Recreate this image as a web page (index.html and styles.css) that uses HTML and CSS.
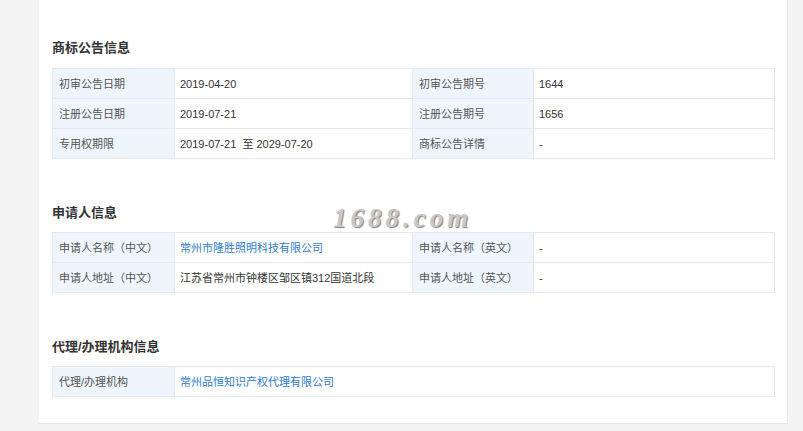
FILE: index.html
```
<!DOCTYPE html>
<html>
    <head>
        <title>商标详情</title>
        <meta charset="UTF-8" />
        <link rel="stylesheet" href="styles.css">
    </head>
    <body>
        <div class="main">
            <div class="panel">
                <div class="section">
                    <h2>商标公告信息</h2>
                    <table class="info">
                        <colgroup>
                            <col class="c-label" />
                            <col class="c-value" />
                            <col class="c-label2" />
                            <col />
                        </colgroup>
                        <tr>
                            <td class="label">初审公告日期</td>
                            <td>2019-04-20</td>
                            <td class="label">初审公告期号</td>
                            <td>1644</td>
                        </tr>
                        <tr>
                            <td class="label">注册公告日期</td>
                            <td>2019-07-21</td>
                            <td class="label">注册公告期号</td>
                            <td>1656</td>
                        </tr>
                        <tr>
                            <td class="label">专用权期限</td>
                            <td>2019-07-21&nbsp; 至 2029-07-20</td>
                            <td class="label">商标公告详情</td>
                            <td>-</td>
                        </tr>
                    </table>
                </div>

                <div class="section">
                    <h2>申请人信息</h2>
                    <table class="info">
                        <colgroup>
                            <col class="c-label" />
                            <col class="c-value" />
                            <col class="c-label2" />
                            <col />
                        </colgroup>
                        <tr>
                            <td class="label">申请人名称（中文）</td>
                            <td><a href="#">常州市隆胜照明科技有限公司</a></td>
                            <td class="label">申请人名称（英文）</td>
                            <td>-</td>
                        </tr>
                        <tr>
                            <td class="label">申请人地址（中文）</td>
                            <td>江苏省常州市钟楼区邹区镇312国道北段</td>
                            <td class="label">申请人地址（英文）</td>
                            <td>-</td>
                        </tr>
                    </table>
                </div>

                <div class="section">
                    <h2>代理/办理机构信息</h2>
                    <table class="info">
                        <colgroup>
                            <col class="c-label" />
                            <col />
                        </colgroup>
                        <tr>
                            <td class="label">代理/办理机构</td>
                            <td><a href="#">常州品恒知识产权代理有限公司</a></td>
                        </tr>
                    </table>
                </div>
            </div>
        </div>
        <!-- watermark overlay -->
        <div class="watermark">1688.com</div>
    </body>
</html>
```

FILE: styles.css
```
body {
    margin: 0;
    background: #f4f4f4;
    color: #333;
    font-family: "Liberation Sans", "Noto Sans CJK SC", sans-serif;
    font-size: 11px;
}
.main {
    padding-left: 39px;
}
.panel {
    width: 749px;
    box-sizing: border-box;
    background: #fff;
    border-right: 1px solid #ebebeb;
    border-bottom: 1px solid #e6e6e6;
    padding: 38px 13px 26px 13px;
}
.section + .section {
    margin-top: 44px;
}
h2 {
    margin: 0 0 10px 0;
    font-size: 13px;
    line-height: 20px;
    font-weight: bold;
    color: #333;
}
.section + .section h2 {
    margin-bottom: 9px;
}
table.info {
    width: 723px;
    table-layout: fixed;
    border-collapse: collapse;
}
.c-label {
    width: 122px;
}
.c-value {
    width: 238px;
}
.c-label2 {
    width: 121px;
}
table.info td {
    height: 30px;
    box-sizing: border-box;
    padding: 0 5px;
    border: 1px solid #e4e9ef;
    line-height: 16px;
    color: #333;
    white-space: nowrap;
}
table.info td.label {
    background: #eef5fc;
    color: #555;
    padding-left: 6px;
}
table.info a {
    color: #2d7bd0;
    text-decoration: none;
}

/* 1688 watermark over the page */
.watermark {
    position: absolute;
    left: 333px;
    top: 203px;
    font-family: "Liberation Serif", serif;
    font-style: italic;
    font-weight: bold;
    font-size: 27px;
    letter-spacing: 4px;
    color: #c8c8c8;
    text-shadow: 1px 1px 1px #808080;
}
```
